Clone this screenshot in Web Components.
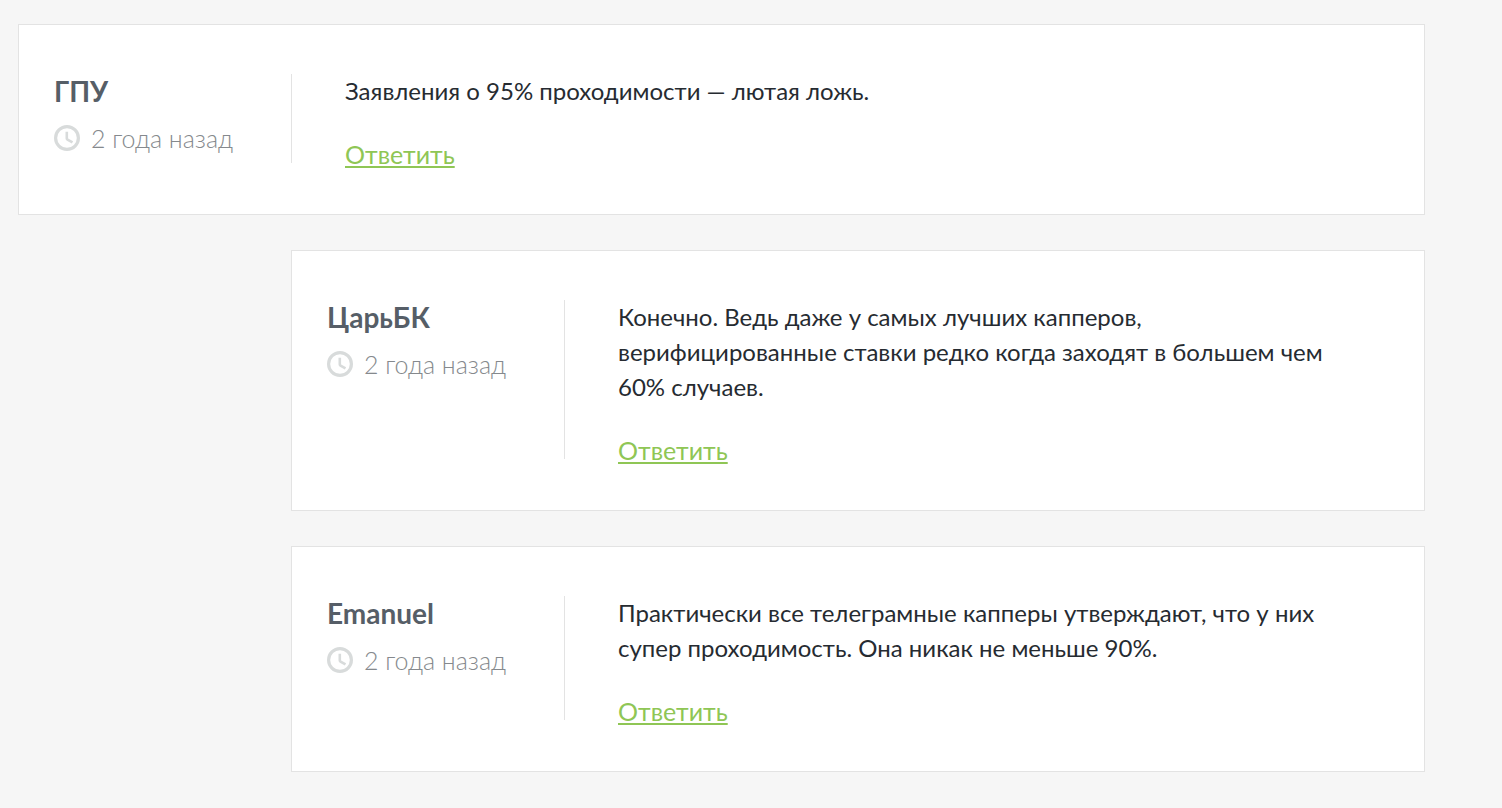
<!DOCTYPE html>
<html lang="ru">
<head>
<meta charset="utf-8">
<title>Комментарии</title>
<style>
body {
  margin: 0;
  background: #f6f6f6;
  font-family: Lato, "Open Sans", sans-serif;
  color: #262b31;
}
</style>
</head>
<body>

<comment-list>
  <comment-card author="ГПУ" time="2 года назад">Заявления о 95% проходимости — лютая ложь.</comment-card>
  <comment-card reply author="ЦарьБК" time="2 года назад">Конечно. Ведь даже у самых лучших капперов, верифицированные ставки редко когда заходят в большем чем 60% случаев.</comment-card>
  <comment-card reply author="Emanuel" time="2 года назад">Практически все телеграмные капперы утверждают, что у них супер проходимость. Она никак не меньше 90%.</comment-card>
</comment-list>

<script>
// list wrapper
var template_list = document.createElement("template");
template_list.innerHTML = `
<style>
:host {
  display: flex;
  flex-direction: column;
  gap: 35px;
  padding: 24px 77px 36px 18px;
}
</style>
<slot></slot>
`;

class CommentList extends HTMLElement {
  constructor() {
    super();
    this.attachShadow({ mode: "open" });
    this.shadowRoot.appendChild(template_list.content.cloneNode(true));
  }
}
customElements.define("comment-list", CommentList);

// clock + date
var template_time = document.createElement("template");
template_time.innerHTML = `
<style>
:host {
  display: flex;
  align-items: center;
  gap: 11px;
  height: 26px;
  font-size: 25px;
  font-weight: 300;
  line-height: 24px;
  color: #85898d;
  white-space: nowrap;
}
svg {
  flex: none;
  width: 26px;
  height: 26px;
}
</style>
<svg viewBox="0 0 26 26" fill="none" stroke="#d8dbdb" aria-hidden="true">
  <circle cx="13" cy="13" r="11.4" stroke-width="3.2"/>
  <path d="M12.8 6.8v6.6q0 .8.7 1.2l5 2.8" stroke-width="2.6"/>
</svg>
<span><slot></slot></span>
`;

class CommentTime extends HTMLElement {
  constructor() {
    super();
    this.attachShadow({ mode: "open" });
    this.shadowRoot.appendChild(template_time.content.cloneNode(true));
  }
}
customElements.define("comment-time", CommentTime);

// one comment
var template_card = document.createElement("template");
template_card.innerHTML = `
<style>
:host {
  display: block;
  background: #fff;
  border: 1px solid #e3e3e3;
  padding: 49px 70px 51px 35px;
}
:host([reply]) {
  margin-left: 273px;
}
article {
  display: grid;
  grid-template-columns: 238px 1fr;
}
.info {
  border-right: 1px solid #e3e3e3;
}
.name {
  margin: 0 0 17px;
  font-size: 28px;
  font-weight: 700;
  line-height: 34px;
  color: #565e67;
}
.content {
  padding-left: 53px;
}
.text {
  margin: -1px 0 37px;
  font-size: 24px;
  line-height: 35px;
}
.reply {
  display: block;
  width: max-content;
  font-size: 25px;
  line-height: 18px;
  color: #8fc655;
  text-decoration: underline;
  text-decoration-thickness: 2px;
  text-underline-offset: 2px;
  text-decoration-skip-ink: none;
}
</style>
<article>
  <div class="info">
    <h3 class="name"></h3>
    <comment-time></comment-time>
  </div>
  <div class="content">
    <p class="text"><slot></slot></p>
    <a class="reply" href="#">Ответить</a>
  </div>
</article>
`;

class CommentCard extends HTMLElement {
  constructor() {
    super();
    this.attachShadow({ mode: "open" });
    this.shadowRoot.appendChild(template_card.content.cloneNode(true));
  }

  connectedCallback() {
    this.shadowRoot.querySelector(".name").textContent = this.getAttribute("author");
    this.shadowRoot.querySelector("comment-time").textContent = this.getAttribute("time");
  }
}
customElements.define("comment-card", CommentCard);
</script>
</body>
</html>
